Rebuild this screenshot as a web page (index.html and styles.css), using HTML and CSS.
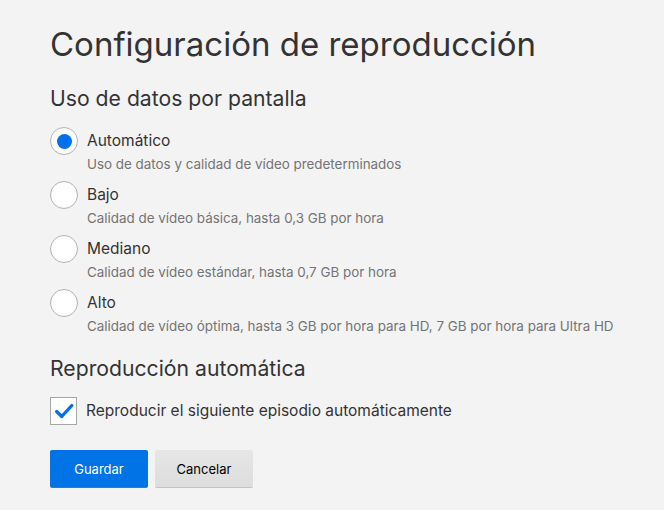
FILE: index.html
```html
<!DOCTYPE html>
<html lang="es">
<head>
<meta charset="utf-8">
<title>Configuración de reproducción</title>
<link rel="stylesheet" href="styles.css">
</head>
<body>
<main class="page">
  <h1 class="title">Configuración de reproducción</h1>

  <h2 class="section">Uso de datos por pantalla</h2>
  <div class="options">
    <div class="option">
      <span class="radio checked"></span>
      <span class="label">Automático</span>
      <span class="desc">Uso de datos y calidad de vídeo predeterminados</span>
    </div>
    <div class="option">
      <span class="radio"></span>
      <span class="label">Bajo</span>
      <span class="desc">Calidad de vídeo básica, hasta 0,3 GB por hora</span>
    </div>
    <div class="option">
      <span class="radio"></span>
      <span class="label">Mediano</span>
      <span class="desc">Calidad de vídeo estándar, hasta 0,7 GB por hora</span>
    </div>
    <div class="option">
      <span class="radio"></span>
      <span class="label">Alto</span>
      <span class="desc">Calidad de vídeo óptima, hasta 3 GB por hora para HD, 7 GB por hora para Ultra HD</span>
    </div>
  </div>

  <h2 class="section section-2">Reproducción automática</h2>
  <div class="check-row">
    <span class="checkbox">
      <svg viewBox="0 0 24 24" width="22" height="22"><path d="M4 12.5 L9.5 18 L20.5 6" fill="none" stroke="#0071eb" stroke-width="3.6" stroke-linecap="round" stroke-linejoin="round"/></svg>
    </span>
    <span class="label">Reproducir el siguiente episodio automáticamente</span>
  </div>

  <div class="actions">
    <button class="btn btn-primary">Guardar</button>
    <button class="btn btn-secondary">Cancelar</button>
  </div>
</main>
</body>
</html>
```

FILE: styles.css
```css
html, body {
  margin: 0;
  padding: 0;
  background: #f3f3f3;
}
body {
  font-family: Inter, "Liberation Sans", Arial, sans-serif;
  color: #333;
}
.page {
  padding: 20px 50px;
}
.title {
  margin: 0;
  font-size: 33px;
  font-weight: 400;
  line-height: 48px;
  color: #333;
}
.section {
  margin: 16px 0 0;
  font-size: 21.2px;
  font-weight: 400;
  line-height: 28px;
  color: #333;
}
.section-2 {
  margin-top: 19px;
}
.options {
  margin-top: 15px;
  display: flex;
  flex-direction: column;
  gap: 8px;
}
.option {
  display: grid;
  grid-template-columns: 28px 1fr;
  column-gap: 9px;
  align-items: center;
}
.radio {
  width: 28px;
  height: 28px;
  box-sizing: border-box;
  border: 1px solid #b3b3b3;
  border-radius: 50%;
  background: #fff;
  display: flex;
  align-items: center;
  justify-content: center;
}
.radio.checked::after {
  content: "";
  width: 15px;
  height: 15px;
  border-radius: 50%;
  background: #0071eb;
}
.label {
  font-size: 15.5px;
  line-height: 28px;
  color: #333;
}
.desc {
  grid-column: 2;
  font-size: 13.4px;
  line-height: 18px;
  color: #737373;
}
.check-row {
  margin-top: 15px;
  display: flex;
  align-items: center;
  gap: 9px;
}
.checkbox {
  width: 27px;
  height: 28px;
  box-sizing: border-box;
  border: 1px solid #a6a6a6;
  background: #fff;
  display: flex;
  align-items: center;
  justify-content: center;
}
.actions {
  margin-top: 25px;
  display: flex;
  gap: 7px;
}
.btn {
  width: 98px;
  height: 37px;
  border: 0;
  border-radius: 2px;
  font-family: Inter, "Liberation Sans", Arial, sans-serif;
  font-size: 13px;
  cursor: pointer;
}
.btn-primary {
  background: #0073e6;
  color: #fff;
  box-shadow: 0 1px 0 rgba(0,0,0,0.55);
}
.btn-secondary {
  background: linear-gradient(#e6e6e6, #dddddd);
  color: #000;
  box-shadow: 0 1px 0 rgba(0,0,0,0.2);
}
```
